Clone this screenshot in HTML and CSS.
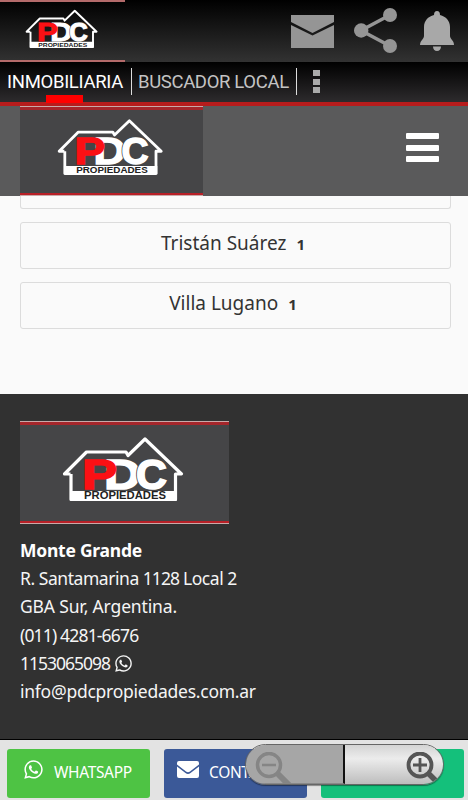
FILE: index.html
```html
<!DOCTYPE html>
<html lang="es">
<head>
    <meta charset="UTF-8" />
    <meta name="viewport" content="width=device-width, initial-scale=1" />
    <title>PDC Propiedades</title>
    <link rel="stylesheet" href="styles.css">
</head>
<body>
    <svg class="defs" width="0" height="0">
        <defs>
            <symbol id="logo" viewBox="0 0 209 102">
                <path d="M50.500 53H44.500L66.500 31H106L108 34.500 125 18 161.500 53H155.500V78.500H51V53" fill="none" stroke="#fff" stroke-width="3.200" stroke-linejoin="round"/>
                <path d="M50 70H157V79.500H50Z" fill="#fff"/>
                <g class="logo-letters">
                    <text x="84" y="68" textLength="37" lengthAdjust="spacingAndGlyphs" class="logo-d">D</text>
                    <text x="116" y="68" textLength="31" lengthAdjust="spacingAndGlyphs" class="logo-cut">C</text>
                    <text x="116" y="68" textLength="31" lengthAdjust="spacingAndGlyphs" class="logo-d">C</text>
                    <text x="62" y="68" textLength="35" lengthAdjust="spacingAndGlyphs" class="logo-p">P</text>
                </g>
                <text x="64" y="78.200" textLength="82" lengthAdjust="spacingAndGlyphs" class="logo-name">PROPIEDADES</text>
            </symbol>
            <symbol id="whatsapp" viewBox="0 0 448 512">
                <path fill="currentColor" d="M380.900 97.100C339 55.100 283.200 32 223.900 32c-122.400 0-222 99.600-222 222 0 39.100 10.200 77.300 29.600 111L0 480l117.700-30.900c32.400 17.700 68.900 27 106.100 27h.1c122.300 0 224.100-99.600 224.100-222 0-59.300-25.200-115-67.100-157zm-157 341.600c-33.200 0-65.700-8.900-94-25.700l-6.700-4-69.800 18.300L72 359.200l-4.400-7c-18.500-29.400-28.200-63.300-28.200-98.200 0-101.700 82.800-184.500 184.600-184.500 49.300 0 95.600 19.200 130.400 54.100 34.800 34.900 56.200 81.200 56.100 130.500 0 101.800-84.900 184.600-186.600 184.600zm101.200-138.200c-5.500-2.800-32.800-16.200-37.900-18-5.100-1.900-8.800-2.800-12.500 2.800-3.700 5.600-14.300 18-17.600 21.800-3.200 3.700-6.500 4.200-12 1.400-32.600-16.300-54-29.100-75.500-66-5.700-9.800 5.700-9.100 16.300-30.300 1.800-3.700.9-6.900-.5-9.700-1.400-2.800-12.500-30.100-17.100-41.200-4.500-10.800-9.100-9.300-12.500-9.500-3.200-.2-6.900-.2-10.600-.2-3.700 0-9.700 1.400-14.800 6.900-5.100 5.600-19.400 19-19.400 46.300 0 27.300 19.900 53.700 22.600 57.400 2.800 3.700 39.100 59.700 94.800 83.800 35.200 15.200 49 16.500 66.600 13.900 10.700-1.600 32.800-13.400 37.400-26.400 4.600-13 4.600-24.100 3.200-26.400-1.300-2.500-5-3.900-10.500-6.600z"/>
            </symbol>
        </defs>
    </svg>

    <header class="appbar">
        <div class="appbar-logo"><svg><use href="#logo"/></svg></div>
        <div class="actions">
            <svg class="mail" width="43" height="33" viewBox="0 0 43 33" fill="#959595">
                <path d="M0 0H43V7L21.500 18 0 7ZM0 10 21.500 20.500 43 10V33H0Z"/>
            </svg>
            <svg class="share" width="43" height="45" viewBox="0 0 43 45" fill="#959595">
                <path d="M36 7 7 22.500 36 38" fill="none" stroke="#959595" stroke-width="3.500"/>
                <circle cx="36" cy="7" r="7"/><circle cx="7.200" cy="22.500" r="7.200"/><circle cx="36" cy="38" r="7"/>
            </svg>
            <svg class="bell" width="34" height="40" viewBox="0 0 34 40" fill="#a8a8a8">
                <path d="M17 0c2 0 3 1.500 3 4 6 1.500 10 6 10 12v9c0 3 4 4.500 4 9H0c0-4.500 4-6 4-9v-9C4 10 8 5.500 14 4c0-2.500 1-4 3-4ZM13 35.500H21c0 2.500-1.500 4.500-4 4.500s-4-2-4-4.500Z"/>
            </svg>
        </div>
    </header>

    <div class="tabs">
        <a class="tab active">INMOBILIARIA</a>
        <a class="tab">BUSCADOR LOCAL</a>
        <div class="dots"><i></i><i></i><i></i></div>
    </div>

    <nav class="nav">
        <div class="nav-logo logo-box"><svg><use href="#logo"/></svg></div>
        <div class="burger"><i></i><i></i><i></i></div>
    </nav>

    <main class="list">
        <div class="item cut"></div>
        <div class="item"><span>Tristán Suárez</span><b>1</b></div>
        <div class="item"><span>Villa Lugano</span><b>1</b></div>
    </main>

    <footer class="footer">
        <div class="footer-logo logo-box"><svg><use href="#logo"/></svg></div>
        <p><strong>Monte Grande</strong></p>
        <p class="street">R. Santamarina <span class="num">1128</span> Local 2</p>
        <p class="city">GBA Sur, Argentina.</p>
        <p><span class="num phone">(011) 4281-6676</span></p>
        <p><span class="num">1153065098</span><svg class="wa-small"><use href="#whatsapp"/></svg></p>
        <p class="email">info@pdcpropiedades.com.ar</p>
    </footer>

    <div class="bottom">
        <a class="btn green"><svg class="wa"><use href="#whatsapp"/></svg><span>WHATSAPP</span></a>
        <a class="btn blue">
            <svg class="env" viewBox="0 0 22 17" fill="#fff">
                <path d="M2 0H20Q22 0 22 2V3.500L13 10.500Q11 12 9 10.500L0 3.500V2Q0 0 2 0ZM0 5.500 8.500 12Q11 13.800 13.500 12L22 5.500V15Q22 17 20 17H2Q0 17 0 15Z"/>
            </svg>
            <span>CONTACTO</span>
        </a>
        <a class="btn teal"></a>
        <div class="zoom">
            <div class="zoom-out">
                <svg width="37" height="33" viewBox="0 0 37 33" fill="none" stroke="#858585">
                    <path d="M22.500 21.500 34 33" stroke-width="6"/>
                    <circle cx="14" cy="13" r="11.500" stroke-width="3.500"/>
                    <path d="M7 13H21" stroke-width="2.500"/>
                </svg>
            </div>
            <div class="zoom-in">
                <svg width="37" height="33" viewBox="0 0 37 33" fill="none" stroke="#555">
                    <path d="M22.500 21.500 31 30" stroke-width="5.500"/>
                    <circle cx="14" cy="13" r="11.500" stroke-width="3.800"/>
                    <path d="M7 13H21M14 6V20" stroke-width="2.800"/>
                </svg>
            </div>
        </div>
    </div>
</body>
</html>
```
FILE: styles.css
```css
* {
    box-sizing: border-box;
}
body {
    margin: 0;
    height: 800px;
    overflow: hidden;
    display: flex;
    flex-direction: column;
    background: #fafafa;
    font-family: "Noto Sans", sans-serif;
}
svg {
    display: block;
    flex: none;
}
.defs {
    position: absolute;
}
.logo-letters {
    font: bold 42.5px "Liberation Sans", sans-serif;
    stroke-width: 1.6px;
}
.logo-d {
    fill: #fff;
    stroke: #fff;
}
.logo-cut {
    fill: #454547;
    stroke: #454547;
    stroke-width: 3.2px;
}
.logo-p {
    fill: #fb1014;
    stroke: #fb1014;
}
.logo-name {
    font: bold 10px "Liberation Sans", sans-serif;
    fill: #222;
}
/* App bar */
.appbar {
    height: 62px;
    flex: none;
    display: flex;
    justify-content: space-between;
    background: linear-gradient(#000, #323232);
}
.appbar-logo {
    width: 125px;
    height: 62px;
    border-top: 2px solid #b36a6a;
    border-bottom: 2px solid #b36a6a;
}
.appbar-logo svg {
    width: 125px;
    height: 61px;
    margin-top: -2px;
}
.actions {
    display: flex;
    padding-right: 14px;
}
.mail {
    margin: 15px 20px 0 0;
}
.share {
    margin: 8px 23px 0 0;
}
.bell {
    margin-top: 11px;
}
/* Tabs */
.tabs {
    height: 44px;
    flex: none;
    display: flex;
    align-items: flex-start;
    padding: 6px 0 0 7px;
    background: linear-gradient(#000, #2d2b2d 40px);
    border-bottom: 4px solid #b71c1c;
    font-family: Roboto, sans-serif;
    font-size: 18.5px;
    line-height: 28px;
    letter-spacing: -0.3px;
    white-space: nowrap;
}
.tab {
    position: relative;
    height: 27px;
    width: 125px;
    border-right: 1px solid #ddd;
    color: #c4c4c4;
}
.tab + .tab {
    width: 165px;
    padding-left: 6px;
    letter-spacing: -0.35px;
}
.tab.active {
    color: #fff;
}
.tab.active::after {
    content: "";
    position: absolute;
    left: 39px;
    top: 27px;
    width: 37px;
    height: 8px;
    background: #f00;
}
.dots {
    margin: 2px 0 0 16px;
}
.dots i {
    display: block;
    width: 7px;
    height: 6px;
    margin-bottom: 2.5px;
    background: #aaa;
}
/* Site nav */
.nav {
    height: 90px;
    flex: none;
    display: flex;
    justify-content: space-between;
    padding: 0 29px 0 20px;
    background: #5a5a5b;
}
.logo-box {
    background: #454547;
    border-top: 1px solid #c9a9a9;
    border-bottom: 1px solid #c9a9a9;
    box-shadow: inset 0 3px 0 #a5262b, inset 0 -2px 0 #b82027;
}
.nav-logo {
    width: 183px;
    height: 90px;
}
.nav-logo svg {
    width: 183px;
    height: 89px;
    margin-top: -2px;
}
.burger {
    padding-top: 27px;
}
.burger i {
    display: block;
    width: 33px;
    height: 6px;
    margin-bottom: 5.5px;
    border-radius: 1px;
    background: #fff;
}
/* Results */
.list {
    height: 198px;
    flex: none;
    padding: 0 17px 0 20px;
}
.item {
    height: 47px;
    margin-bottom: 13px;
    padding-right: 5px;
    display: flex;
    justify-content: center;
    border: 1px solid #dcdcdc;
    border-radius: 3px;
    font-size: 19px;
    line-height: 41px;
    color: #333;
}
.item.cut {
    height: 13px;
    border-top: 0;
    border-radius: 0 0 3px 3px;
}
.item b {
    margin-left: 10px;
    font-size: 15px;
    line-height: 43px;
}
/* Footer */
.footer {
    height: 346px;
    flex: none;
    padding: 27px 20px 0;
    background: #313131;
    border-bottom: 1px solid #000;
    color: #f5f5f5;
    font-size: 17.5px;
}
.footer-logo {
    width: 209px;
    height: 103px;
    margin-bottom: 12px;
}
.footer-logo svg {
    width: 209px;
    height: 102px;
    margin-top: -1px;
}
.footer p {
    height: 28.2px;
    line-height: 28.2px;
    margin: 0;
    white-space: nowrap;
}
.footer strong {
    letter-spacing: -0.25px;
    color: #fff;
}
.footer .street {
    letter-spacing: -0.45px;
}
.footer .city {
    letter-spacing: -0.15px;
}
.footer .email {
    letter-spacing: -0.25px;
}
.num {
    letter-spacing: -1px;
}
.phone {
    letter-spacing: -0.83px;
}
.wa-small {
    display: inline-block;
    width: 17px;
    height: 19px;
    margin-left: 5px;
    vertical-align: -3px;
}
/* Bottom buttons */
.bottom {
    position: relative;
    height: 60px;
    flex: none;
    display: flex;
    gap: 14px;
    padding: 9px 4px 2px 7px;
    background: #e3e3e3;
}
.btn {
    flex: 1;
    display: flex;
    align-items: flex-start;
    border-radius: 3px;
    color: #fff;
    font-size: 15.5px;
    line-height: 46px;
    letter-spacing: -0.35px;
    overflow: hidden;
}
.green {
    background: #4ec344;
}
.blue {
    background: #3b5998;
}
.teal {
    background: #14c07b;
}
.wa {
    width: 19px;
    height: 21px;
    margin: 10px 11px 0 17px;
}
.env {
    width: 22px;
    height: 17px;
    margin: 12px 10px 0 13px;
}
/* Zoom control */
.zoom {
    position: absolute;
    left: 245px;
    top: 4px;
    width: 199px;
    height: 41px;
    display: flex;
    border: 1px solid #666;
    border-radius: 21px;
    overflow: hidden;
    box-shadow: 0 1px 1px rgba(0,0,0,0.4);
}
.zoom-out {
    width: 99px;
    padding: 7px 0 0 9px;
    background: #a6a6a6;
    border-right: 2px solid #111;
    border-bottom: 1px solid #888;
}
.zoom-in {
    flex: 1;
    padding: 7px 0 0 61px;
    background: linear-gradient(#d4d4d4, #ececec 35%, #bdbdbd);
}
```
